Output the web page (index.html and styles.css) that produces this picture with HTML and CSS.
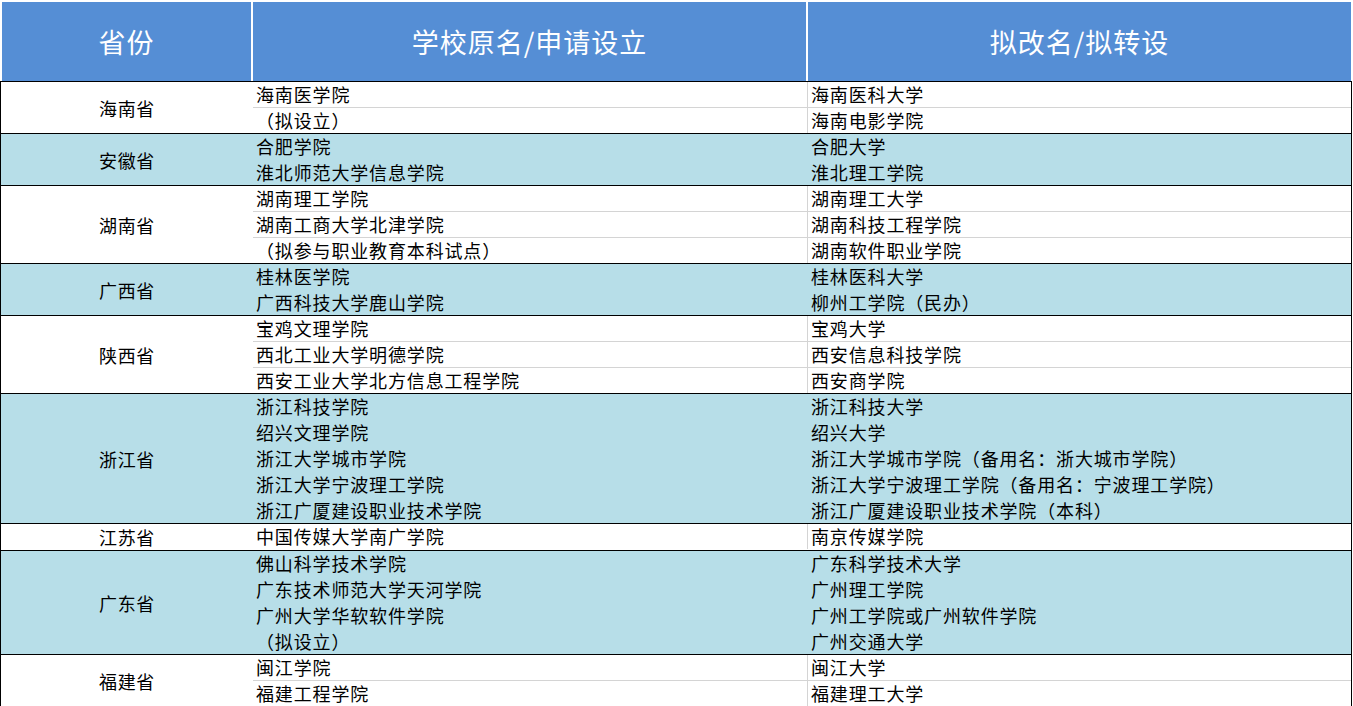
FILE: index.html
```html
<!DOCTYPE html>
<html lang="zh-CN">
<head>
<meta charset="utf-8">
<title>高校更名</title>
<link rel="stylesheet" href="styles.css">
</head>
<body>
<div class="sheet">
  <div class="head">
    <div class="hcell">省份</div>
    <div class="hcell">学校原名/申请设立</div>
    <div class="hcell">拟改名/拟转设</div>
  </div>

  <div class="group white">
    <div class="prov">海南省</div>
    <div class="rows">
      <div class="row"><div class="c">海南医学院</div><div class="c">海南医科大学</div></div>
      <div class="row"><div class="c">（拟设立）</div><div class="c">海南电影学院</div></div>
    </div>
  </div>

  <div class="group blue">
    <div class="prov">安徽省</div>
    <div class="rows">
      <div class="row"><div class="c">合肥学院</div><div class="c">合肥大学</div></div>
      <div class="row"><div class="c">淮北师范大学信息学院</div><div class="c">淮北理工学院</div></div>
    </div>
  </div>

  <div class="group white">
    <div class="prov">湖南省</div>
    <div class="rows">
      <div class="row"><div class="c">湖南理工学院</div><div class="c">湖南理工大学</div></div>
      <div class="row"><div class="c">湖南工商大学北津学院</div><div class="c">湖南科技工程学院</div></div>
      <div class="row"><div class="c">（拟参与职业教育本科试点）</div><div class="c">湖南软件职业学院</div></div>
    </div>
  </div>

  <div class="group blue">
    <div class="prov">广西省</div>
    <div class="rows">
      <div class="row"><div class="c">桂林医学院</div><div class="c">桂林医科大学</div></div>
      <div class="row"><div class="c">广西科技大学鹿山学院</div><div class="c">柳州工学院（民办）</div></div>
    </div>
  </div>

  <div class="group white">
    <div class="prov">陕西省</div>
    <div class="rows">
      <div class="row"><div class="c">宝鸡文理学院</div><div class="c">宝鸡大学</div></div>
      <div class="row"><div class="c">西北工业大学明德学院</div><div class="c">西安信息科技学院</div></div>
      <div class="row"><div class="c">西安工业大学北方信息工程学院</div><div class="c">西安商学院</div></div>
    </div>
  </div>

  <div class="group blue">
    <div class="prov">浙江省</div>
    <div class="rows">
      <div class="row"><div class="c">浙江科技学院</div><div class="c">浙江科技大学</div></div>
      <div class="row"><div class="c">绍兴文理学院</div><div class="c">绍兴大学</div></div>
      <div class="row"><div class="c">浙江大学城市学院</div><div class="c">浙江大学城市学院（备用名：浙大城市学院）</div></div>
      <div class="row"><div class="c">浙江大学宁波理工学院</div><div class="c">浙江大学宁波理工学院（备用名：宁波理工学院）</div></div>
      <div class="row"><div class="c">浙江广厦建设职业技术学院</div><div class="c">浙江广厦建设职业技术学院（本科）</div></div>
    </div>
  </div>

  <div class="group white">
    <div class="prov">江苏省</div>
    <div class="rows">
      <div class="row"><div class="c">中国传媒大学南广学院</div><div class="c">南京传媒学院</div></div>
    </div>
  </div>

  <div class="group blue">
    <div class="prov">广东省</div>
    <div class="rows">
      <div class="row"><div class="c">佛山科学技术学院</div><div class="c">广东科学技术大学</div></div>
      <div class="row"><div class="c">广东技术师范大学天河学院</div><div class="c">广州理工学院</div></div>
      <div class="row"><div class="c">广州大学华软软件学院</div><div class="c">广州工学院或广州软件学院</div></div>
      <div class="row"><div class="c">（拟设立）</div><div class="c">广州交通大学</div></div>
    </div>
  </div>

  <div class="group white">
    <div class="prov">福建省</div>
    <div class="rows">
      <div class="row"><div class="c">闽江学院</div><div class="c">闽江大学</div></div>
      <div class="row"><div class="c">福建工程学院</div><div class="c">福建理工大学</div></div>
    </div>
  </div>
</div>
</body>
</html>
```

FILE: styles.css
```css
html, body {
  margin: 0;
  padding: 0;
  background: #ffffff;
}

body {
  font-family: "Noto Sans CJK SC", "Noto Sans", sans-serif;
  color: #000000;
  text-spacing-trim: space-all;
}

.sheet {
  width: 1352px;
}

.head {
  display: grid;
  grid-template-columns: 249px 553px 543px;
  column-gap: 2px;
  padding: 2px 0 0 2px;
  height: 82px;
  box-sizing: border-box;
  border-bottom: 1px solid #000000;
}

.hcell {
  background: #558ed5;
  color: #ffffff;
  font-size: 27px;
  letter-spacing: 1px;
  display: flex;
  align-items: center;
  justify-content: center;
}

.group {
  display: flex;
  border-left: 1px solid #000000;
  border-right: 1px solid #000000;
  border-bottom: 1px solid #000000;
}

.group.white {
  background: #ffffff;
  --line: #d4d4d4;
}

.group.blue {
  background: #b7dee8;
  --line: #b7dee8;
}

.prov {
  width: 252px;
  flex: none;
  display: flex;
  align-items: center;
  justify-content: center;
  font-size: 18px;
  letter-spacing: 0.6px;
}

.rows {
  flex: 1;
}

.row {
  display: grid;
  grid-template-columns: 555px 1fr;
  height: 26px;
  box-sizing: border-box;
  border-bottom: 1px solid var(--line);
}

.row:last-child {
  height: 25px;
  border-bottom: none;
}

.c {
  padding-left: 3px;
  font-size: 18px;
  letter-spacing: 0.85px;
  line-height: 25px;
  white-space: nowrap;
  overflow: hidden;
}

.c:first-child {
  border-right: 1px solid var(--line);
}
```
